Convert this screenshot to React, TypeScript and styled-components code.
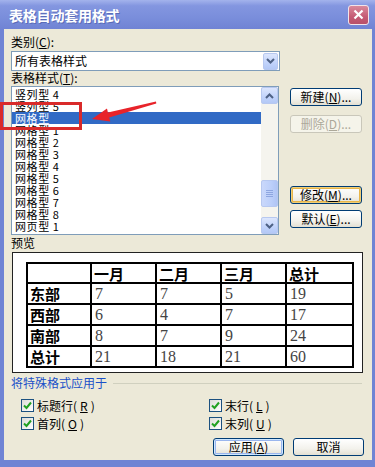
import React from "react";
import styled, { createGlobalStyle, css } from "styled-components";

const Global = createGlobalStyle`
  html, body { margin: 0; padding: 0; width: 375px; height: 467px; overflow: hidden; }
  body { font-family: "Noto Sans CJK SC", "DejaVu Sans", sans-serif; }
  * { box-sizing: border-box; }
`;

const UI = `"Noto Sans CJK SC", "Liberation Sans", sans-serif`;

const Window = styled.div`
  position: relative;
  width: 375px;
  height: 467px;
  background: #6f84d4;
  display: flex;
  flex-direction: column;
`;

const TitleBar = styled.div`
  height: 29px;
  flex: none;
  display: flex;
  align-items: center;
  justify-content: space-between;
  padding: 0 6px 0 9px;
  background: linear-gradient(#a3b3ec 0%, #8396e0 20%, #7a8edb 60%, #7083d4 100%);
`;

const Title = styled.div`
  color: #fff;
  font-family: ${UI};
  font-weight: 700;
  font-size: 14px;
  letter-spacing: -0.2px;
  line-height: 16px;
  text-shadow: 1px 1px 0 #5a6cb8;
`;

const CloseBtn = styled.div`
  width: 21px;
  height: 20px;
  border: 1px solid #f2e4ea;
  border-radius: 3px;
  background: linear-gradient(#d98a9c, #c55a74 60%, #b8506a);
  display: flex;
  align-items: center;
  justify-content: center;
`;

const Body = styled.div`
  flex: 1;
  margin: 0 3px 7px 4px;
  background: #ece9d8;
  padding: 7px 0 0 7px;
  display: flex;
  flex-direction: column;
`;

const Label = styled.div<{ $mt?: number }>`
  font-family: ${UI};
  font-size: 12px;
  line-height: 12px;
  height: 12px;
  color: #000;
  margin-top: ${(p) => p.$mt ?? 0}px;
  white-space: nowrap;
`;

const Combo = styled.div`
  margin-top: 3px;
  width: 269px;
  height: 20px;
  border: 1px solid #7f9db9;
  background: #fff;
  display: flex;
  align-items: center;
  justify-content: space-between;
  padding: 0 1px 0 3px;
`;

const ComboText = styled.span`
  font-family: ${UI};
  font-size: 12px;
  line-height: 12px;
`;

const ArrowBtn = styled.div<{ $h?: number }>`
  width: ${(p) => (p.$h ? 17 : 15)}px;
  height: ${(p) => p.$h ?? 17}px;
  flex: none;
  border: 1px solid #b7c8f0;
  border-radius: 2px;
  background: linear-gradient(#dce6fd, #c1d3fb 60%, #b3c8f6);
  display: flex;
  align-items: center;
  justify-content: center;
`;

const StyleRow = styled.div`
  margin-top: 2px;
  display: flex;
  align-items: flex-start;
`;

const ListBox = styled.div`
  width: 268px;
  height: 149px;
  border: 1px solid #7f9db9;
  background: #fff;
  display: flex;
`;

const Items = styled.div`
  flex: 1;
  padding-top: 1px;
`;

const Item = styled.div<{ $sel?: boolean }>`
  height: 12px;
  line-height: 12px;
  padding-left: 3px;
  font-family: ${UI};
  font-size: 11px;
  letter-spacing: 0.6px;
  white-space: pre;
  color: #000;
  ${(p) =>
    p.$sel &&
    css`
      background: #316ac5;
      color: #fff;
    `}
`;

const ScrollBar = styled.div`
  width: 17px;
  display: flex;
  flex-direction: column;
  background: #f5f4ee;
`;

const Track = styled.div`
  flex: 1;
  padding-top: 76px;
`;

const Thumb = styled.div`
  height: 27px;
  border: 1px solid #b7c8f0;
  border-radius: 2px;
  background: linear-gradient(90deg, #cad8fb, #bccffa 60%, #b0c5f5);
  display: flex;
  flex-direction: column;
  align-items: center;
  justify-content: center;
  gap: 1px;
`;

const Grip = styled.div`
  width: 7px;
  height: 1px;
  background: #8ea6e0;
`;

const BtnCol = styled.div`
  margin-left: 11px;
  width: 72px;
  display: flex;
  flex-direction: column;
`;

const Button = styled.div<{ $mt?: number; $disabled?: boolean; $focus?: "gold" | "blue"; $w?: number }>`
  margin-top: ${(p) => p.$mt ?? 0}px;
  width: ${(p) => p.$w ?? 72}px;
  height: 18px;
  border: 1px solid #003c74;
  border-radius: 3px;
  background: linear-gradient(#ffffff, #f3f2ec 60%, #e3e0d3);
  display: flex;
  align-items: center;
  justify-content: center;
  font-family: ${UI};
  font-size: 12px;
  line-height: 12px;
  color: #000;
  white-space: nowrap;
  ${(p) =>
    p.$focus === "gold" &&
    css`
      box-shadow: inset 0 0 0 1px #f0cf7a, inset 0 0 0 2px #e8b548;
    `}
  ${(p) =>
    p.$focus === "blue" &&
    css`
      box-shadow: inset 0 0 0 1px #cee7ff, inset 0 0 0 2px #9ab6ee;
    `}
  ${(p) =>
    p.$disabled &&
    css`
      border-color: #c9c7ba;
      color: #aca899;
      background: #f5f4ea;
    `}
`;

const U = styled.span`
  text-decoration: underline;
`;

const PreviewBox = styled.div`
  margin: 3px 0 0 1px;
  width: 351px;
  height: 121px;
  border: 1px solid #222;
  background: #fff;
  padding: 9px 0 0 13px;
`;

const Table = styled.table`
  border-collapse: collapse;
  width: 326px;
  table-layout: fixed;
`;

const Tr = styled.tr<{ $h: number }>`
  height: ${(p) => p.$h}px;
`;

const Th = styled.td`
  border: 2px solid #000;
  padding: 0 0 0 2px;
  font-family: ${UI};
  font-weight: 700;
  font-size: 15px;
  line-height: 17px;
  color: #000;
  vertical-align: middle;
`;

const Td = styled.td`
  border: 2px solid #000;
  padding: 0 0 0 3px;
  font-family: "Liberation Serif", serif;
  font-size: 16px;
  line-height: 17px;
  color: #444;
  vertical-align: middle;
`;

const GroupHead = styled.div`
  margin-top: 4px;
  height: 12px;
  display: flex;
  align-items: center;
  gap: 6px;
  padding-right: 10px;
`;

const GroupTitle = styled.span`
  font-family: ${UI};
  font-size: 12px;
  line-height: 12px;
  color: #1a50c8;
  white-space: nowrap;
`;

const GroupLine = styled.div`
  flex: 1;
  height: 1px;
  background: #d0d0bf;
`;

const CheckGrid = styled.div`
  margin-top: 10px;
  padding-left: 10px;
  display: grid;
  grid-template-columns: 188px 1fr;
  row-gap: 5px;
`;

const Check = styled.div`
  display: flex;
  align-items: center;
  gap: 3px;
  height: 13px;
  font-family: ${UI};
  font-size: 12px;
  line-height: 12px;
`;

const Box = styled.div`
  width: 13px;
  height: 13px;
  border: 1px solid #1c5180;
  background: linear-gradient(135deg, #dcdcd7, #ffffff);
  display: flex;
  align-items: center;
  justify-content: center;
`;

const ButtonRow = styled.div`
  margin-top: 8px;
  display: flex;
  justify-content: flex-end;
  gap: 9px;
  padding-right: 8px;
`;

const Overlay = styled.svg`
  position: absolute;
  left: 0;
  top: 0;
  pointer-events: none;
`;

const Chevron = ({ up }: { up?: boolean }) => (
  <svg width="9" height="6" viewBox="0 0 9 6">
    <polyline
      points={up ? "1,5 4.5,1.5 8,5" : "1,1 4.5,4.5 8,1"}
      fill="none"
      stroke="#4d6185"
      strokeWidth="2"
    />
  </svg>
);

const Tick = () => (
  <svg width="9" height="9" viewBox="0 0 9 9">
    <polyline points="1,4.5 3.5,7 8,1.5" fill="none" stroke="#21a121" strokeWidth="2" />
  </svg>
);

const items = [
  "竖列型 4",
  "竖列型 5",
  "网格型",
  "网格型 1",
  "网格型 2",
  "网格型 3",
  "网格型 4",
  "网格型 5",
  "网格型 6",
  "网格型 7",
  "网格型 8",
  "网页型 1",
];

const rows = [
  ["东部", "7", "7", "5", "19"],
  ["西部", "6", "4", "7", "17"],
  ["南部", "8", "7", "9", "24"],
  ["总计", "21", "18", "21", "60"],
];

export default function App() {
  return (
    <>
      <Global />
      <Window>
        <TitleBar>
          <Title>表格自动套用格式</Title>
          <CloseBtn>
            <svg width="11" height="11" viewBox="0 0 11 11">
              <path d="M1.5 1.5 L9.5 9.5 M9.5 1.5 L1.5 9.5" stroke="#fff" strokeWidth="2.2" />
            </svg>
          </CloseBtn>
        </TitleBar>
        <Body>
          <Label>
            类别(<U>C</U>):
          </Label>
          <Combo>
            <ComboText>所有表格样式</ComboText>
            <ArrowBtn>
              <Chevron />
            </ArrowBtn>
          </Combo>
          <Label $mt={1}>
            表格样式(<U>T</U>):
          </Label>
          <StyleRow>
            <ListBox>
              <Items>
                {items.map((t, i) => (
                  <Item key={t} $sel={i === 2}>
                    {t}
                  </Item>
                ))}
              </Items>
              <ScrollBar>
                <ArrowBtn $h={17}>
                  <Chevron up />
                </ArrowBtn>
                <Track>
                  <Thumb>
                    <Grip />
                    <Grip />
                    <Grip />
                    <Grip />
                  </Thumb>
                </Track>
                <ArrowBtn $h={17}>
                  <Chevron />
                </ArrowBtn>
              </ScrollBar>
            </ListBox>
            <BtnCol>
              <Button $mt={2}>
                新建(<U>N</U>)...
              </Button>
              <Button $mt={9} $disabled>
                删除(<U>D</U>)...
              </Button>
              <Button $mt={53} $focus="gold">
                修改(<U>M</U>)...
              </Button>
              <Button $mt={6}>
                默认(<U>E</U>)...
              </Button>
            </BtnCol>
          </StyleRow>
          <Label $mt={2}>预览</Label>
          <PreviewBox>
            <Table>
              <colgroup>
                <col style={{ width: 64 }} />
                <col style={{ width: 65 }} />
                <col style={{ width: 65 }} />
                <col style={{ width: 65 }} />
                <col style={{ width: 67 }} />
              </colgroup>
              <tbody>
                <Tr $h={20}>
                  <Th />
                  <Th>一月</Th>
                  <Th>二月</Th>
                  <Th>三月</Th>
                  <Th>总计</Th>
                </Tr>
                {rows.map((r) => (
                  <Tr $h={21} key={r[0]}>
                    <Th>{r[0]}</Th>
                    {r.slice(1).map((v, i) => (
                      <Td key={i}>{v}</Td>
                    ))}
                  </Tr>
                ))}
              </tbody>
            </Table>
          </PreviewBox>
          <GroupHead>
            <GroupTitle>将特殊格式应用于</GroupTitle>
            <GroupLine />
          </GroupHead>
          <CheckGrid>
            <Check>
              <Box>
                <Tick />
              </Box>
              标题行(<U>R</U>)
            </Check>
            <Check>
              <Box>
                <Tick />
              </Box>
              末行(<U>L</U>)
            </Check>
            <Check>
              <Box>
                <Tick />
              </Box>
              首列(<U>O</U>)
            </Check>
            <Check>
              <Box>
                <Tick />
              </Box>
              末列(<U>U</U>)
            </Check>
          </CheckGrid>
          <ButtonRow>
            <Button $w={71} $focus="blue">
              应用(<U>A</U>)
            </Button>
            <Button $w={71}>取消</Button>
          </ButtonRow>
        </Body>
        <Overlay width="375" height="467" viewBox="0 0 375 467">
          <rect x="1.5" y="103.5" width="79" height="25" fill="none" stroke="#d92a2a" strokeWidth="3" />
          <polygon
            points="92,119 107,108.5 107.9,112.4 156,101.5 156.3,103.4 109.2,117.6 110.3,121.5"
            fill="#e8232a"
          />
        </Overlay>
      </Window>
    </>
  );
}
